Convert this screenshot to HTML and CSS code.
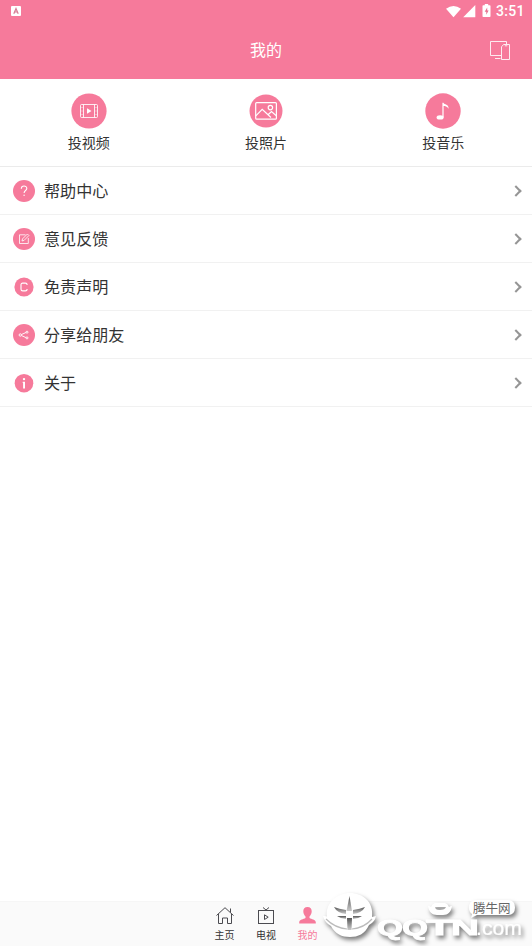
FILE: index.html
```html
<!DOCTYPE html>
<html lang="zh-CN">
<head>
<meta charset="utf-8">
<title>我的</title>
<link rel="stylesheet" href="styles.css">
</head>
<body>
<header>
  <div class="status">
    <svg class="notice" width="10" height="10" viewBox="0 0 10 10"><rect width="10" height="10" rx="1" fill="#fff"/><path d="M2.8 7.7 5 2.5 7.2 7.7M3.6 6h2.8" fill="none" stroke="#d77b94" stroke-width="1.2"/></svg>
    <svg width="46" height="16" viewBox="0 0 46 16" fill="#fff"><path d="M0 5.8Q7.5 .2 15 5.8L7.5 14.2Z"/><path d="M29.3 2v12.2H17.2Z"/><path d="M38.8 1h3.4v1.3h1.5q.8 0 .8.8v10.1q0 .8-.8.8h-6.4q-.8 0-.8-.8V3.1q0-.8.8-.8h1.5Z"/><path d="M41.2 4.4 38.7 8.7h1.6v3l2.3-4.3H41.2Z" fill="#e66f8e"/></svg>
    <span class="time">3:51</span>
  </div>
  <div class="titlebar">
    <h1>我的</h1>
    <svg class="devices" width="22" height="22" viewBox="0 0 22 22" fill="none" stroke="#fff" stroke-opacity=".85" stroke-width="1"><path d="M12 15.5H1.500V1.500H17.500V4M6 18.500h5.500"/><path d="M12.500 6.800 14.600 4.500h5.900v15h-8Z"/><path d="M15.800 5.800h2.500"/></svg>
  </div>
</header>
<nav class="casts">
  <a class="cast"><svg width="36" height="36" viewBox="0 0 36 36"><circle cx="18" cy="18" r="17.6" fill="#f67a9b"/><g fill="none" stroke="#fff" stroke-opacity=".85"><rect x="9.5" y="11.5" width="17" height="13" rx="1"/><path d="M12.5 11.5v13M23.5 11.5v13"/><path d="M9.5 14.5h3M9.5 18h3M9.5 21.5h3M23.5 14.5h3M23.5 18h3M23.5 21.5h3" stroke-width=".4"/></g><path d="m16 15.2 4.500 2.800-4.500 2.800Z" fill="#fff"/></svg><span>投视频</span></a>
  <a class="cast"><svg width="36" height="36" viewBox="0 0 36 36"><circle cx="18" cy="18" r="16.5" fill="#f67a9b"/><g fill="none" stroke="#fff" stroke-width="1.2"><rect x="7.7" y="9.6" width="20.7" height="16.6" rx="1"/><circle cx="22.4" cy="14.6" r="2.2"/><path d="m7.8 22.8 6.4-6.5 8.8 8.2M20 21.7l3.5-3.2 4.8 4.2"/></g></svg><span>投照片</span></a>
  <a class="cast"><svg width="36" height="36" viewBox="0 0 36 36"><circle cx="18" cy="18" r="17.7" fill="#f67a9b"/><g fill="#fff"><ellipse cx="15.1" cy="24.4" rx="3.5" ry="2.2"/><path d="M17.4 9.8h1.1c.8 2 5.3 1.4 5.1 5.9-1.5-2.5-3.6-2.6-5-2.7v11.5h-1.2Z"/></g></svg><span>投音乐</span></a>
</nav>
<main>
  <a class="row"><svg width="22" height="22" viewBox="0 0 22 22"><circle cx="11" cy="11" r="11" fill="#f67a9b"/><path d="M8.300 8.800c0-3.700 5.500-3.500 5.500-.4 0 2.100-2.700 2.100-2.700 4.600" fill="none" stroke="#fff" stroke-width="1.1"/><circle cx="11.1" cy="15.3" r=".7" fill="#fff"/></svg><span>帮助中心</span><i class="chevron"></i></a>
  <a class="row"><svg width="22" height="22" viewBox="0 0 22 22"><circle cx="11" cy="11" r="11" fill="#f67a9b"/><g fill="none" stroke="#fff" stroke-width=".8"><path d="M12.5 6.8H6.5v8.7h8.8V10"/><path d="m9 13 .5-2.1L14.4 6l1.5 1.5-4.8 4.9Z"/></g></svg><span>意见反馈</span><i class="chevron"></i></a>
  <a class="row"><svg width="22" height="22" viewBox="0 0 22 22"><circle cx="11" cy="11" r="9.6" fill="#f67a9b"/><path d="M14.1 9.1V8.8q0-1.700-1.700-1.700H9.700Q8 7.100 8 8.800v4.400q0 1.700 1.700 1.700h2.700q1.700 0 1.700-1.700v-.3" fill="none" stroke="#fff" stroke-width="1.1"/></svg><span>免责声明</span><i class="chevron"></i></a>
  <a class="row"><svg width="22" height="22" viewBox="0 0 22 22"><circle cx="11" cy="11" r="11" fill="#f67a9b"/><g fill="none" stroke="#fff" stroke-width=".9"><path d="m8.5 10.500 4.500-2M8.500 11.600l4.500 2"/><circle cx="7.3" cy="11" r="1.2"/><circle cx="14" cy="8.2" r="1"/><circle cx="14" cy="13.9" r="1"/></g></svg><span>分享给朋友</span><i class="chevron"></i></a>
  <a class="row"><svg width="22" height="22" viewBox="0 0 22 22"><circle cx="11" cy="11.2" r="9.3" fill="#f67a9b"/><circle cx="11" cy="7.1" r="1.2" fill="#fff"/><path d="M9.700 9.700h2.300v6.800H10.100v-5.600h-.4Z" fill="#fff"/></svg><span>关于</span><i class="chevron"></i></a>
</main>
<footer>
  <a class="tab"><svg width="20" height="20" viewBox="0 0 20 20" fill="none" stroke="#4b4b50"><path d="M1.500 9.500 10 1.700l8.500 7.800M3.500 8v9.500h4v-5.500h5v5.500h4V8M15.500 6.500v-4"/></svg><span>主页</span></a>
  <a class="tab"><svg width="20" height="20" viewBox="0 0 20 20" fill="none" stroke="#4b4b50"><rect x="2.5" y="4.5" width="15" height="13"/><path d="m7 1.500 3 2.500 3-2.500M8.500 8.800v4.700l3.700-2.300Z"/></svg><span>电视</span></a>
  <a class="tab active"><svg width="20" height="20" viewBox="0 0 20 20" fill="#f67a9b"><path d="M9.500 1c2.800 0 4.400 2 4.200 4.600-.1 2.200-1 3.800-2.200 4.800v1.600c2 1.100 6 1.600 6.300 4.200v1.300H1.200v-1.300c.3-2.600 4.300-3.100 6.300-4.200v-1.600C6.300 9.400 5.400 7.800 5.300 5.600 5.100 3 6.700 1 9.500 1Z"/></svg><span>我的</span></a>
</footer>
<svg class="watermark" width="212" height="66" viewBox="320 880 212 66">
  <defs><linearGradient id="shade" x1="0" y1="0" x2="0" y2="1"><stop offset="0" stop-color="#555"/><stop offset="1" stop-color="#ccc"/></linearGradient></defs>
  <g class="raised" fill="#fff">
    <path d="M323 916q4 0 4 1C325 903 337 893 350 893s24 9 22 24l4-1q-1 6-7 9c-4 9-11 12-19 12s-15-3-19-11q-6-3-8-10Z"/>
    <g class="brand"><text x="377" y="935" textLength="26" lengthAdjust="spacingAndGlyphs">Q</text><text x="402" y="935" textLength="26" lengthAdjust="spacingAndGlyphs">Q</text><text x="426" y="935" textLength="27" lengthAdjust="spacingAndGlyphs">T</text><text x="451" y="935" textLength="28" lengthAdjust="spacingAndGlyphs">N</text></g>
    <path fill-rule="evenodd" d="M428 906q2 0 3 1 1-3 4-4h10q3 1 4 4 1-1 3-1c-1 6-4 9-9 9h-6c-5 0-8-3-9-9ZM435 907q0 3 5 3t6-3Z"/>
    <text class="domain" x="476" y="935" textLength="46" lengthAdjust="spacingAndGlyphs">.com</text>
    <path d="M476 900h32q7 0 7 7.500t-7 7.500h-31l-6 3 1-4q-3-2-3-6 0-8 7-8Z"/>
  </g>
  <g fill="url(#shade)">
    <path d="m349.500 896-3 15h5.500Z"/>
    <path d="M334 907q5 2 12 3v4q-9-1-12-7Z"/>
    <path d="M365 907q-5 2-12 3v4q9-1 12-7Z"/>
    <path d="M337 916h9v3q-5 0-9-3ZM362 916h-9v3q5 0 9-3Z"/>
    <path d="M347 918h5l-.5 12h-4Z"/>
  </g>
  <path d="M326 919q9 9 21 10M352 929q12-1 20-10" fill="none" stroke="#bbb" stroke-width="1.2"/>
  <text class="bubble" x="473" y="912.5">腾牛网</text>
</svg>
</body>
</html>
```

FILE: styles.css
```css
* { box-sizing: border-box; }
body {
  margin: 0;
  height: 946px;
  display: flex;
  flex-direction: column;
  overflow: hidden;
  background: #fff;
  color: #333;
  font-family: Roboto, "Noto Sans CJK SC", sans-serif;
}
header { height: 79px; background: #f67a9b; color: #fff; }
.status { height: 22px; display: flex; align-items: center; padding: 0 8px 0 11px; }
.notice { margin-right: auto; }
.time { margin-left: 4px; width: 28px; font-size: 14px; font-weight: 500; line-height: 22px; letter-spacing: .3px; white-space: nowrap; }
.titlebar { height: 57px; display: grid; grid-template-columns: 1fr auto 1fr; align-items: center; padding-right: 21px; padding-left: 21px; }
h1 { grid-column: 2; margin: 0; padding-top: 1px; font-size: 16px; font-weight: 400; line-height: 24px; }
.devices { justify-self: end; }
.casts { height: 88px; display: grid; grid-template-columns: repeat(3, 1fr); border-bottom: 1px solid #ebebeb; }
.cast { display: flex; flex-direction: column; align-items: center; padding-top: 14px; font-size: 14px; line-height: 20px; }
.cast span { margin-top: 4px; }
.row { height: 48px; display: flex; align-items: center; padding: 0 11px 0 13px; border-bottom: 1px solid #f1f1f1; font-size: 16.1px; }
.row span { margin-left: 9px; padding-top: 2px; line-height: 24px; }
.chevron { width: 8px; height: 8px; margin-left: auto; margin-right: 1px; border: solid #959595; border-width: 2px 2px 0 0; transform: rotate(45deg); }
footer { height: 45px; margin-top: auto; display: flex; justify-content: center; background: #fafafa; border-top: 1px solid #f6f6f6; }
.tab { width: 41.5px; display: flex; flex-direction: column; align-items: center; padding-top: 4px; font-size: 10px; line-height: 14px; }
.tab span { margin-top: 3px; }
.active { color: #f67a9b; }
.watermark { position: absolute; left: 320px; top: 880px; }
.raised { filter: drop-shadow(2px 3px 2px rgba(0, 0, 0, .5)); }
.brand { font: bold 22px "Liberation Sans", sans-serif; stroke: #fff; stroke-width: .8px; }
.domain { font: 20px "Liberation Sans", sans-serif; stroke: #fff; stroke-width: .2px; }
.bubble { font: 12.5px "Noto Sans CJK SC", sans-serif; fill: #666; }
```
